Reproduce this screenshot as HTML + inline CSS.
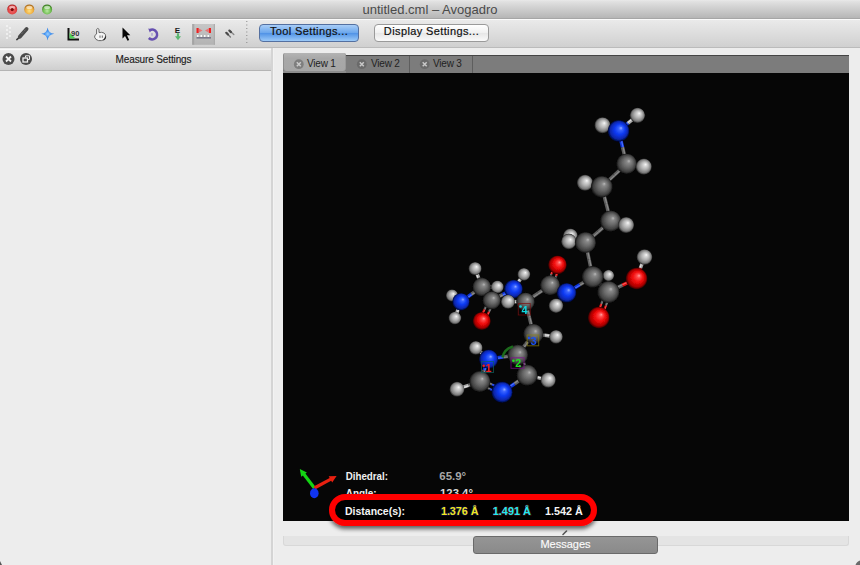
<!DOCTYPE html>
<html><head><meta charset="utf-8">
<style>
*{margin:0;padding:0;box-sizing:border-box}
html,body{width:860px;height:565px;overflow:hidden;background:#ededed;font-family:"Liberation Sans",sans-serif}
.abs{position:absolute}
#title{left:0;top:0;width:860px;height:19px;background:linear-gradient(#e9e9e9,#e0e0e0 10%,#b6b6b6);border-bottom:1px solid #a6a6a6}
#title .t{position:absolute;left:0;width:860px;top:2px;text-align:center;font-size:13px;color:#4a4a4a}
.tl{position:absolute;top:4px;width:11px;height:11px;border-radius:50%}
#toolbar{left:0;top:19px;width:860px;height:29px;background:linear-gradient(#eaeaea,#d0d0d0);border-top:1px solid #fafafa;border-bottom:1px solid #bbbbbb}
.btn{position:absolute;height:18px;border-radius:4px;font-size:11px;letter-spacing:0.38px;text-align:center;line-height:12px;color:#0a0a0a;-webkit-text-stroke:0.2px #222}
#dock{left:0;top:48px;width:272px;height:517px;background:#ededed}
#docktitle{left:0;top:49px;width:271px;height:22px;background:linear-gradient(#ececec,#cfcfcf);border-top:1px solid #fafafa;border-bottom:1px solid #b4b4b4}
#splitter{left:271px;top:48px;width:2px;height:517px;background:#d4d4d4;border-right:1px solid #f2f2f2;width:3px}
#tabbar{left:283px;top:55px;width:566px;height:18px;background:#7c7c7c;border-top:1px solid #454545}
.tab{position:absolute;top:0;height:17px;font-size:10px;letter-spacing:-0.2px;color:#222;border-right:1px solid #5e5e5e}
.tab span{position:absolute;top:2px}
#gl{left:283px;top:73px;width:566px;height:448px;background:#060606}
#msgbar{left:283px;top:536px;width:566px;height:10px;background:#e4e4e4;border:1px solid #d8d8d8;border-top:none;border-radius:0 0 3px 3px}
#msgbtn{left:473px;top:536px;width:185px;height:18px;background:linear-gradient(#959595,#8a8a8a);border:1px solid #6a6a6a;border-radius:3px;color:#fafafa;font-size:11px;text-align:center;line-height:15px;-webkit-text-stroke:0.15px #fff}
</style></head>
<body>
<div id="title" class="abs">
  <svg class="abs" style="left:0;top:0" width="60" height="19">
  <defs>
   <radialGradient id="tlr" cx="0.5" cy="0.6" r="0.6"><stop offset="0" stop-color="#f07070"/><stop offset="0.7" stop-color="#e04040"/><stop offset="1" stop-color="#a02020"/></radialGradient>
   <radialGradient id="tly" cx="0.5" cy="0.65" r="0.6"><stop offset="0" stop-color="#ffe080"/><stop offset="0.7" stop-color="#eca83a"/><stop offset="1" stop-color="#a86818"/></radialGradient>
   <radialGradient id="tlg" cx="0.5" cy="0.65" r="0.6"><stop offset="0" stop-color="#b8e8a0"/><stop offset="0.7" stop-color="#68b848"/><stop offset="1" stop-color="#3a7a20"/></radialGradient>
  </defs>
  <circle cx="12.2" cy="9.4" r="5" fill="url(#tlr)"/><ellipse cx="12.2" cy="7.4" rx="3" ry="1.6" fill="#fff" opacity="0.55"/><circle cx="12.2" cy="9.6" r="1.6" fill="#7a0a0a"/>
  <circle cx="29.3" cy="9.4" r="5" fill="url(#tly)"/><ellipse cx="29.3" cy="7.4" rx="3" ry="1.6" fill="#fff" opacity="0.55"/>
  <circle cx="47.1" cy="9.4" r="5" fill="url(#tlg)"/><ellipse cx="47.1" cy="7.4" rx="3" ry="1.6" fill="#fff" opacity="0.55"/>
</svg>
  <div class="t">untitled.cml – Avogadro</div>
</div>
<div id="toolbar" class="abs">
  <div class="btn" style="left:259px;top:4px;width:100px;background:linear-gradient(#a8cdf7 0%,#6aa6ec 50%,#4f92e6 51%,#9ccaf8 100%);border:1px solid #5470a0">Tool Settings...</div>
  <div class="btn" style="left:374px;top:4px;width:115px;background:linear-gradient(#ffffff,#f0f0f0 50%,#e6e6e6 51%,#fafafa);border:1px solid #9a9a9a">Display Settings...</div>
</div>
<div id="dock" class="abs"></div>
<div id="docktitle" class="abs">
  <div class="abs" style="left:35px;top:4px;width:237px;text-align:center;font-size:10px;letter-spacing:-0.12px;color:#151515;-webkit-text-stroke:0.15px #333">Measure Settings</div>
</div>
<div id="splitter" class="abs"></div>
<div id="tabbar" class="abs">
  <div class="abs" style="left:0;top:15px;width:63px;height:2px;background:#8c8c8c"></div>
  <div class="tab" style="left:0;top:-3px;height:18px;width:63px;background:linear-gradient(#b4b4b4,#a8a8a8 30%,#a6a6a6);border-left:1px solid #8e8e8e;border-radius:2px 2px 3px 3px;border-right:1px solid #999"><span style="left:23px;top:5px">View 1</span></div>
  <div class="tab" style="left:63px;width:64px"><span style="left:25px">View 2</span></div>
  <div class="tab" style="left:127px;width:63px"><span style="left:23px">View 3</span></div>
</div>
<div id="gl" class="abs"></div>
<svg class="abs" style="left:0;top:0" width="860" height="565" viewBox="0 0 860 565">
<defs><filter id="soft" x="-5%" y="-5%" width="110%" height="110%"><feGaussianBlur stdDeviation="0.55"/></filter></defs><g filter="url(#soft)">
<defs>
<radialGradient id="gC" cx="0.5" cy="0.5" r="0.5" fx="0.62" fy="0.36"><stop offset="0" stop-color="#b8b8b8"/><stop offset="0.18" stop-color="#888888"/><stop offset="0.5" stop-color="#686868"/><stop offset="0.82" stop-color="#404040"/><stop offset="1" stop-color="#101010"/></radialGradient>
<radialGradient id="gH" cx="0.5" cy="0.5" r="0.5" fx="0.62" fy="0.36"><stop offset="0" stop-color="#fafafa"/><stop offset="0.18" stop-color="#dadada"/><stop offset="0.5" stop-color="#b0b0b0"/><stop offset="0.82" stop-color="#7a7a7a"/><stop offset="1" stop-color="#202020"/></radialGradient>
<radialGradient id="gN" cx="0.5" cy="0.5" r="0.5" fx="0.62" fy="0.36"><stop offset="0" stop-color="#9ab0ff"/><stop offset="0.18" stop-color="#3a64ff"/><stop offset="0.5" stop-color="#0a38f0"/><stop offset="0.82" stop-color="#0826a8"/><stop offset="1" stop-color="#010630"/></radialGradient>
<radialGradient id="gO" cx="0.5" cy="0.5" r="0.5" fx="0.62" fy="0.36"><stop offset="0" stop-color="#ffa0a0"/><stop offset="0.18" stop-color="#ff4a4a"/><stop offset="0.5" stop-color="#f00808"/><stop offset="0.82" stop-color="#a80404"/><stop offset="1" stop-color="#300000"/></radialGradient>
</defs>
<line x1="618.6" y1="130.9" x2="610.5" y2="128.1" stroke="#1034d8" stroke-width="3.5"/>
<line x1="610.5" y1="128.1" x2="602.5" y2="125.2" stroke="#a8a8a8" stroke-width="3.5"/>
<line x1="618.4" y1="131.4" x2="610.4" y2="128.5" stroke="#4a70ff" stroke-width="1.22"/>
<line x1="610.4" y1="128.5" x2="602.3" y2="125.7" stroke="#e0e0e0" stroke-width="1.22"/>
<line x1="618.6" y1="130.9" x2="628.0" y2="123.1" stroke="#1034d8" stroke-width="3.5"/>
<line x1="628.0" y1="123.1" x2="637.5" y2="115.3" stroke="#a8a8a8" stroke-width="3.5"/>
<line x1="618.3" y1="130.5" x2="627.7" y2="122.7" stroke="#4a70ff" stroke-width="1.22"/>
<line x1="627.7" y1="122.7" x2="637.2" y2="114.9" stroke="#e0e0e0" stroke-width="1.22"/>
<line x1="618.6" y1="130.9" x2="622.6" y2="147.4" stroke="#1034d8" stroke-width="3.5"/>
<line x1="622.6" y1="147.4" x2="626.6" y2="163.8" stroke="#5e5e5e" stroke-width="3.5"/>
<line x1="619.1" y1="130.8" x2="623.1" y2="147.2" stroke="#4a70ff" stroke-width="1.22"/>
<line x1="623.1" y1="147.2" x2="627.1" y2="163.7" stroke="#8a8a8a" stroke-width="1.22"/>
<line x1="626.6" y1="163.8" x2="635.2" y2="165.2" stroke="#5e5e5e" stroke-width="3.5"/>
<line x1="635.2" y1="165.2" x2="643.8" y2="166.6" stroke="#a8a8a8" stroke-width="3.5"/>
<line x1="626.7" y1="163.3" x2="635.3" y2="164.7" stroke="#8a8a8a" stroke-width="1.22"/>
<line x1="635.3" y1="164.7" x2="643.9" y2="166.1" stroke="#e0e0e0" stroke-width="1.22"/>
<line x1="626.6" y1="163.8" x2="614.2" y2="175.2" stroke="#5e5e5e" stroke-width="3.5"/>
<line x1="614.2" y1="175.2" x2="601.8" y2="186.7" stroke="#5e5e5e" stroke-width="3.5"/>
<line x1="627.0" y1="164.2" x2="614.6" y2="175.6" stroke="#8a8a8a" stroke-width="1.22"/>
<line x1="614.6" y1="175.6" x2="602.2" y2="187.1" stroke="#8a8a8a" stroke-width="1.22"/>
<line x1="601.8" y1="186.7" x2="593.4" y2="184.8" stroke="#5e5e5e" stroke-width="3.5"/>
<line x1="593.4" y1="184.8" x2="585.0" y2="182.8" stroke="#a8a8a8" stroke-width="3.5"/>
<line x1="601.7" y1="187.2" x2="593.3" y2="185.3" stroke="#8a8a8a" stroke-width="1.22"/>
<line x1="593.3" y1="185.3" x2="584.9" y2="183.3" stroke="#e0e0e0" stroke-width="1.22"/>
<line x1="601.8" y1="186.7" x2="606.2" y2="203.8" stroke="#5e5e5e" stroke-width="3.5"/>
<line x1="606.2" y1="203.8" x2="610.7" y2="221.0" stroke="#5e5e5e" stroke-width="3.5"/>
<line x1="602.3" y1="186.6" x2="606.8" y2="203.7" stroke="#8a8a8a" stroke-width="1.22"/>
<line x1="606.8" y1="203.7" x2="611.2" y2="220.9" stroke="#8a8a8a" stroke-width="1.22"/>
<line x1="610.7" y1="221.0" x2="618.4" y2="223.0" stroke="#5e5e5e" stroke-width="3.5"/>
<line x1="618.4" y1="223.0" x2="626.1" y2="225.0" stroke="#a8a8a8" stroke-width="3.5"/>
<line x1="610.8" y1="220.5" x2="618.5" y2="222.5" stroke="#8a8a8a" stroke-width="1.22"/>
<line x1="618.5" y1="222.5" x2="626.2" y2="224.5" stroke="#e0e0e0" stroke-width="1.22"/>
<line x1="610.7" y1="221.0" x2="598.1" y2="231.8" stroke="#5e5e5e" stroke-width="3.5"/>
<line x1="598.1" y1="231.8" x2="585.5" y2="242.5" stroke="#5e5e5e" stroke-width="3.5"/>
<line x1="611.0" y1="221.4" x2="598.4" y2="232.1" stroke="#8a8a8a" stroke-width="1.22"/>
<line x1="598.4" y1="232.1" x2="585.8" y2="242.9" stroke="#8a8a8a" stroke-width="1.22"/>
<line x1="585.5" y1="242.5" x2="578.0" y2="239.2" stroke="#5e5e5e" stroke-width="3.5"/>
<line x1="578.0" y1="239.2" x2="570.4" y2="236.0" stroke="#a8a8a8" stroke-width="3.5"/>
<line x1="585.3" y1="243.0" x2="577.7" y2="239.7" stroke="#8a8a8a" stroke-width="1.22"/>
<line x1="577.7" y1="239.7" x2="570.2" y2="236.5" stroke="#e0e0e0" stroke-width="1.22"/>
<line x1="585.5" y1="242.5" x2="577.1" y2="242.0" stroke="#5e5e5e" stroke-width="3.5"/>
<line x1="577.1" y1="242.0" x2="568.8" y2="241.5" stroke="#a8a8a8" stroke-width="3.5"/>
<line x1="585.5" y1="243.0" x2="577.1" y2="242.5" stroke="#8a8a8a" stroke-width="1.22"/>
<line x1="577.1" y1="242.5" x2="568.8" y2="242.0" stroke="#e0e0e0" stroke-width="1.22"/>
<line x1="585.5" y1="242.5" x2="589.1" y2="259.7" stroke="#5e5e5e" stroke-width="3.5"/>
<line x1="589.1" y1="259.7" x2="592.7" y2="276.9" stroke="#5e5e5e" stroke-width="3.5"/>
<line x1="586.0" y1="242.4" x2="589.6" y2="259.6" stroke="#8a8a8a" stroke-width="1.22"/>
<line x1="589.6" y1="259.6" x2="593.2" y2="276.8" stroke="#8a8a8a" stroke-width="1.22"/>
<line x1="592.7" y1="276.9" x2="600.6" y2="276.2" stroke="#5e5e5e" stroke-width="3.5"/>
<line x1="600.6" y1="276.2" x2="608.5" y2="275.5" stroke="#a8a8a8" stroke-width="3.5"/>
<line x1="592.7" y1="276.4" x2="600.6" y2="275.7" stroke="#8a8a8a" stroke-width="1.22"/>
<line x1="600.6" y1="275.7" x2="608.5" y2="275.0" stroke="#e0e0e0" stroke-width="1.22"/>
<line x1="592.7" y1="276.9" x2="600.5" y2="284.4" stroke="#5e5e5e" stroke-width="3.5"/>
<line x1="600.5" y1="284.4" x2="608.4" y2="292.0" stroke="#5e5e5e" stroke-width="3.5"/>
<line x1="593.1" y1="276.5" x2="600.9" y2="284.1" stroke="#8a8a8a" stroke-width="1.22"/>
<line x1="600.9" y1="284.1" x2="608.8" y2="291.6" stroke="#8a8a8a" stroke-width="1.22"/>
<line x1="608.4" y1="292.0" x2="622.5" y2="285.2" stroke="#5e5e5e" stroke-width="3.5"/>
<line x1="622.5" y1="285.2" x2="636.6" y2="278.5" stroke="#d81010" stroke-width="3.5"/>
<line x1="608.2" y1="291.5" x2="622.3" y2="284.8" stroke="#8a8a8a" stroke-width="1.22"/>
<line x1="622.3" y1="284.8" x2="636.4" y2="278.0" stroke="#ff5a5a" stroke-width="1.22"/>
<line x1="636.6" y1="278.5" x2="640.5" y2="267.8" stroke="#d81010" stroke-width="3.5"/>
<line x1="640.5" y1="267.8" x2="644.5" y2="257.0" stroke="#a8a8a8" stroke-width="3.5"/>
<line x1="636.1" y1="278.3" x2="640.1" y2="267.6" stroke="#ff5a5a" stroke-width="1.22"/>
<line x1="640.1" y1="267.6" x2="644.0" y2="256.8" stroke="#e0e0e0" stroke-width="1.22"/>
<line x1="610.7" y1="292.9" x2="605.9" y2="305.6" stroke="#5e5e5e" stroke-width="2.2"/>
<line x1="605.9" y1="305.6" x2="601.1" y2="318.4" stroke="#d81010" stroke-width="2.2"/>
<line x1="611.0" y1="293.0" x2="606.2" y2="305.7" stroke="#8a8a8a" stroke-width="0.77"/>
<line x1="606.2" y1="305.7" x2="601.4" y2="318.5" stroke="#ff5a5a" stroke-width="0.77"/>
<line x1="606.1" y1="291.1" x2="601.3" y2="303.9" stroke="#5e5e5e" stroke-width="2.2"/>
<line x1="601.3" y1="303.9" x2="596.5" y2="316.6" stroke="#d81010" stroke-width="2.2"/>
<line x1="606.4" y1="291.2" x2="601.6" y2="304.0" stroke="#8a8a8a" stroke-width="0.77"/>
<line x1="601.6" y1="304.0" x2="596.8" y2="316.7" stroke="#ff5a5a" stroke-width="0.77"/>
<line x1="592.7" y1="276.9" x2="579.7" y2="284.8" stroke="#5e5e5e" stroke-width="3.5"/>
<line x1="579.7" y1="284.8" x2="566.6" y2="292.7" stroke="#1034d8" stroke-width="3.5"/>
<line x1="593.0" y1="277.3" x2="579.9" y2="285.2" stroke="#8a8a8a" stroke-width="1.22"/>
<line x1="579.9" y1="285.2" x2="566.9" y2="293.1" stroke="#4a70ff" stroke-width="1.22"/>
<line x1="566.6" y1="292.7" x2="561.3" y2="299.2" stroke="#1034d8" stroke-width="3.5"/>
<line x1="561.3" y1="299.2" x2="556.0" y2="305.7" stroke="#a8a8a8" stroke-width="3.5"/>
<line x1="567.0" y1="293.0" x2="561.7" y2="299.5" stroke="#4a70ff" stroke-width="1.22"/>
<line x1="561.7" y1="299.5" x2="556.4" y2="306.0" stroke="#e0e0e0" stroke-width="1.22"/>
<line x1="566.6" y1="292.7" x2="558.4" y2="289.0" stroke="#1034d8" stroke-width="3.5"/>
<line x1="558.4" y1="289.0" x2="550.1" y2="285.3" stroke="#5e5e5e" stroke-width="3.5"/>
<line x1="566.4" y1="293.2" x2="558.1" y2="289.5" stroke="#4a70ff" stroke-width="1.22"/>
<line x1="558.1" y1="289.5" x2="549.9" y2="285.8" stroke="#8a8a8a" stroke-width="1.22"/>
<line x1="547.7" y1="284.5" x2="551.4" y2="274.2" stroke="#5e5e5e" stroke-width="2.2"/>
<line x1="551.4" y1="274.2" x2="555.1" y2="264.0" stroke="#d81010" stroke-width="2.2"/>
<line x1="547.4" y1="284.3" x2="551.1" y2="274.1" stroke="#8a8a8a" stroke-width="0.77"/>
<line x1="551.1" y1="274.1" x2="554.8" y2="263.8" stroke="#ff5a5a" stroke-width="0.77"/>
<line x1="552.5" y1="286.1" x2="556.2" y2="275.9" stroke="#5e5e5e" stroke-width="2.2"/>
<line x1="556.2" y1="275.9" x2="559.9" y2="265.6" stroke="#d81010" stroke-width="2.2"/>
<line x1="552.1" y1="286.0" x2="555.8" y2="275.8" stroke="#8a8a8a" stroke-width="0.77"/>
<line x1="555.8" y1="275.8" x2="559.5" y2="265.5" stroke="#ff5a5a" stroke-width="0.77"/>
<line x1="550.1" y1="285.3" x2="537.8" y2="293.5" stroke="#5e5e5e" stroke-width="3.5"/>
<line x1="537.8" y1="293.5" x2="525.5" y2="301.7" stroke="#5e5e5e" stroke-width="3.5"/>
<line x1="550.4" y1="285.7" x2="538.1" y2="293.9" stroke="#8a8a8a" stroke-width="1.22"/>
<line x1="538.1" y1="293.9" x2="525.8" y2="302.1" stroke="#8a8a8a" stroke-width="1.22"/>
<line x1="525.5" y1="301.7" x2="516.8" y2="301.7" stroke="#5e5e5e" stroke-width="3.5"/>
<line x1="516.8" y1="301.7" x2="508.0" y2="301.7" stroke="#a8a8a8" stroke-width="3.5"/>
<line x1="525.5" y1="302.2" x2="516.8" y2="302.2" stroke="#8a8a8a" stroke-width="1.22"/>
<line x1="516.8" y1="302.2" x2="508.0" y2="302.2" stroke="#e0e0e0" stroke-width="1.22"/>
<line x1="525.5" y1="301.7" x2="519.5" y2="295.4" stroke="#5e5e5e" stroke-width="3.5"/>
<line x1="519.5" y1="295.4" x2="513.5" y2="289.0" stroke="#1034d8" stroke-width="3.5"/>
<line x1="525.1" y1="302.1" x2="519.1" y2="295.7" stroke="#8a8a8a" stroke-width="1.22"/>
<line x1="519.1" y1="295.7" x2="513.1" y2="289.4" stroke="#4a70ff" stroke-width="1.22"/>
<line x1="513.5" y1="289.0" x2="518.7" y2="281.6" stroke="#1034d8" stroke-width="3.5"/>
<line x1="518.7" y1="281.6" x2="523.9" y2="274.3" stroke="#a8a8a8" stroke-width="3.5"/>
<line x1="513.1" y1="288.7" x2="518.3" y2="281.3" stroke="#4a70ff" stroke-width="1.22"/>
<line x1="518.3" y1="281.3" x2="523.5" y2="274.0" stroke="#e0e0e0" stroke-width="1.22"/>
<line x1="525.5" y1="301.7" x2="529.5" y2="317.8" stroke="#5e5e5e" stroke-width="3.5"/>
<line x1="529.5" y1="317.8" x2="533.4" y2="333.8" stroke="#5e5e5e" stroke-width="3.5"/>
<line x1="526.0" y1="301.6" x2="530.0" y2="317.6" stroke="#8a8a8a" stroke-width="1.22"/>
<line x1="530.0" y1="317.6" x2="533.9" y2="333.7" stroke="#8a8a8a" stroke-width="1.22"/>
<line x1="533.4" y1="333.8" x2="544.7" y2="335.3" stroke="#5e5e5e" stroke-width="3.5"/>
<line x1="544.7" y1="335.3" x2="556.0" y2="336.8" stroke="#a8a8a8" stroke-width="3.5"/>
<line x1="533.5" y1="333.3" x2="544.8" y2="334.8" stroke="#8a8a8a" stroke-width="1.22"/>
<line x1="544.8" y1="334.8" x2="556.1" y2="336.3" stroke="#e0e0e0" stroke-width="1.22"/>
<line x1="533.4" y1="333.8" x2="525.6" y2="344.4" stroke="#5e5e5e" stroke-width="3.5"/>
<line x1="525.6" y1="344.4" x2="517.8" y2="354.9" stroke="#5e5e5e" stroke-width="3.5"/>
<line x1="533.8" y1="334.1" x2="526.0" y2="344.7" stroke="#8a8a8a" stroke-width="1.22"/>
<line x1="526.0" y1="344.7" x2="518.2" y2="355.2" stroke="#8a8a8a" stroke-width="1.22"/>
<line x1="517.8" y1="354.9" x2="503.2" y2="357.0" stroke="#5e5e5e" stroke-width="3.5"/>
<line x1="503.2" y1="357.0" x2="488.6" y2="359.1" stroke="#1034d8" stroke-width="3.5"/>
<line x1="517.9" y1="355.4" x2="503.3" y2="357.5" stroke="#8a8a8a" stroke-width="1.22"/>
<line x1="503.3" y1="357.5" x2="488.7" y2="359.6" stroke="#4a70ff" stroke-width="1.22"/>
<line x1="488.6" y1="359.1" x2="482.2" y2="353.5" stroke="#1034d8" stroke-width="3.5"/>
<line x1="482.2" y1="353.5" x2="475.8" y2="347.8" stroke="#a8a8a8" stroke-width="3.5"/>
<line x1="488.3" y1="359.5" x2="481.9" y2="353.8" stroke="#4a70ff" stroke-width="1.22"/>
<line x1="481.9" y1="353.8" x2="475.5" y2="348.2" stroke="#e0e0e0" stroke-width="1.22"/>
<line x1="488.6" y1="359.1" x2="484.2" y2="370.3" stroke="#1034d8" stroke-width="3.5"/>
<line x1="484.2" y1="370.3" x2="479.9" y2="381.5" stroke="#5e5e5e" stroke-width="3.5"/>
<line x1="489.1" y1="359.3" x2="484.7" y2="370.5" stroke="#4a70ff" stroke-width="1.22"/>
<line x1="484.7" y1="370.5" x2="480.4" y2="381.7" stroke="#8a8a8a" stroke-width="1.22"/>
<line x1="479.9" y1="381.5" x2="468.4" y2="385.4" stroke="#5e5e5e" stroke-width="3.5"/>
<line x1="468.4" y1="385.4" x2="457.0" y2="389.2" stroke="#a8a8a8" stroke-width="3.5"/>
<line x1="480.1" y1="382.0" x2="468.6" y2="385.8" stroke="#8a8a8a" stroke-width="1.22"/>
<line x1="468.6" y1="385.8" x2="457.2" y2="389.7" stroke="#e0e0e0" stroke-width="1.22"/>
<line x1="481.0" y1="379.2" x2="492.1" y2="384.6" stroke="#5e5e5e" stroke-width="2.2"/>
<line x1="492.1" y1="384.6" x2="503.2" y2="389.9" stroke="#1034d8" stroke-width="2.2"/>
<line x1="481.1" y1="379.0" x2="492.2" y2="384.3" stroke="#8a8a8a" stroke-width="0.77"/>
<line x1="492.2" y1="384.3" x2="503.3" y2="389.7" stroke="#4a70ff" stroke-width="0.77"/>
<line x1="478.8" y1="383.8" x2="489.9" y2="389.1" stroke="#5e5e5e" stroke-width="2.2"/>
<line x1="489.9" y1="389.1" x2="501.0" y2="394.5" stroke="#1034d8" stroke-width="2.2"/>
<line x1="479.0" y1="383.5" x2="490.1" y2="388.8" stroke="#8a8a8a" stroke-width="0.77"/>
<line x1="490.1" y1="388.8" x2="501.2" y2="394.2" stroke="#4a70ff" stroke-width="0.77"/>
<line x1="502.1" y1="392.2" x2="514.6" y2="383.7" stroke="#1034d8" stroke-width="3.5"/>
<line x1="514.6" y1="383.7" x2="527.1" y2="375.2" stroke="#5e5e5e" stroke-width="3.5"/>
<line x1="501.8" y1="391.8" x2="514.3" y2="383.3" stroke="#4a70ff" stroke-width="1.22"/>
<line x1="514.3" y1="383.3" x2="526.8" y2="374.8" stroke="#8a8a8a" stroke-width="1.22"/>
<line x1="527.1" y1="375.2" x2="537.7" y2="377.6" stroke="#5e5e5e" stroke-width="3.5"/>
<line x1="537.7" y1="377.6" x2="548.2" y2="380.0" stroke="#a8a8a8" stroke-width="3.5"/>
<line x1="527.2" y1="374.7" x2="537.8" y2="377.1" stroke="#8a8a8a" stroke-width="1.22"/>
<line x1="537.8" y1="377.1" x2="548.3" y2="379.5" stroke="#e0e0e0" stroke-width="1.22"/>
<line x1="524.8" y1="376.2" x2="520.2" y2="366.1" stroke="#5e5e5e" stroke-width="2.2"/>
<line x1="520.2" y1="366.1" x2="515.5" y2="355.9" stroke="#5e5e5e" stroke-width="2.2"/>
<line x1="524.5" y1="376.4" x2="519.9" y2="366.2" stroke="#8a8a8a" stroke-width="0.77"/>
<line x1="519.9" y1="366.2" x2="515.2" y2="356.1" stroke="#8a8a8a" stroke-width="0.77"/>
<line x1="529.4" y1="374.2" x2="524.7" y2="364.0" stroke="#5e5e5e" stroke-width="2.2"/>
<line x1="524.7" y1="364.0" x2="520.1" y2="353.9" stroke="#5e5e5e" stroke-width="2.2"/>
<line x1="529.1" y1="374.3" x2="524.4" y2="364.1" stroke="#8a8a8a" stroke-width="0.77"/>
<line x1="524.4" y1="364.1" x2="519.8" y2="354.0" stroke="#8a8a8a" stroke-width="0.77"/>
<line x1="513.5" y1="289.0" x2="502.6" y2="294.6" stroke="#1034d8" stroke-width="3.5"/>
<line x1="502.6" y1="294.6" x2="491.7" y2="300.3" stroke="#5e5e5e" stroke-width="3.5"/>
<line x1="513.7" y1="289.5" x2="502.8" y2="295.1" stroke="#4a70ff" stroke-width="1.22"/>
<line x1="502.8" y1="295.1" x2="491.9" y2="300.8" stroke="#8a8a8a" stroke-width="1.22"/>
<line x1="494.0" y1="301.4" x2="489.0" y2="311.7" stroke="#5e5e5e" stroke-width="2.2"/>
<line x1="489.0" y1="311.7" x2="484.1" y2="322.0" stroke="#d81010" stroke-width="2.2"/>
<line x1="494.3" y1="301.5" x2="489.3" y2="311.8" stroke="#8a8a8a" stroke-width="0.77"/>
<line x1="489.3" y1="311.8" x2="484.4" y2="322.1" stroke="#ff5a5a" stroke-width="0.77"/>
<line x1="489.4" y1="299.2" x2="484.5" y2="309.5" stroke="#5e5e5e" stroke-width="2.2"/>
<line x1="484.5" y1="309.5" x2="479.5" y2="319.8" stroke="#d81010" stroke-width="2.2"/>
<line x1="489.7" y1="299.4" x2="484.8" y2="309.7" stroke="#8a8a8a" stroke-width="0.77"/>
<line x1="484.8" y1="309.7" x2="479.8" y2="320.0" stroke="#ff5a5a" stroke-width="0.77"/>
<line x1="491.7" y1="300.3" x2="486.8" y2="293.6" stroke="#5e5e5e" stroke-width="3.5"/>
<line x1="486.8" y1="293.6" x2="481.8" y2="286.9" stroke="#5e5e5e" stroke-width="3.5"/>
<line x1="491.3" y1="300.6" x2="486.3" y2="293.9" stroke="#8a8a8a" stroke-width="1.22"/>
<line x1="486.3" y1="293.9" x2="481.4" y2="287.2" stroke="#8a8a8a" stroke-width="1.22"/>
<line x1="481.8" y1="286.9" x2="478.5" y2="277.7" stroke="#5e5e5e" stroke-width="3.5"/>
<line x1="478.5" y1="277.7" x2="475.1" y2="268.5" stroke="#a8a8a8" stroke-width="3.5"/>
<line x1="481.3" y1="287.1" x2="478.0" y2="277.9" stroke="#8a8a8a" stroke-width="1.22"/>
<line x1="478.0" y1="277.9" x2="474.6" y2="268.7" stroke="#e0e0e0" stroke-width="1.22"/>
<line x1="481.8" y1="286.9" x2="489.6" y2="286.9" stroke="#5e5e5e" stroke-width="3.5"/>
<line x1="489.6" y1="286.9" x2="497.4" y2="286.9" stroke="#a8a8a8" stroke-width="3.5"/>
<line x1="481.8" y1="286.4" x2="489.6" y2="286.4" stroke="#8a8a8a" stroke-width="1.22"/>
<line x1="489.6" y1="286.4" x2="497.4" y2="286.4" stroke="#e0e0e0" stroke-width="1.22"/>
<line x1="481.8" y1="286.9" x2="471.4" y2="294.3" stroke="#5e5e5e" stroke-width="3.5"/>
<line x1="471.4" y1="294.3" x2="461.0" y2="301.7" stroke="#1034d8" stroke-width="3.5"/>
<line x1="482.1" y1="287.3" x2="471.7" y2="294.7" stroke="#8a8a8a" stroke-width="1.22"/>
<line x1="471.7" y1="294.7" x2="461.3" y2="302.1" stroke="#4a70ff" stroke-width="1.22"/>
<line x1="461.0" y1="301.7" x2="456.5" y2="298.5" stroke="#1034d8" stroke-width="3.5"/>
<line x1="456.5" y1="298.5" x2="452.0" y2="295.4" stroke="#a8a8a8" stroke-width="3.5"/>
<line x1="460.7" y1="302.1" x2="456.2" y2="299.0" stroke="#4a70ff" stroke-width="1.22"/>
<line x1="456.2" y1="299.0" x2="451.7" y2="295.8" stroke="#e0e0e0" stroke-width="1.22"/>
<line x1="461.0" y1="301.7" x2="457.9" y2="309.9" stroke="#1034d8" stroke-width="3.5"/>
<line x1="457.9" y1="309.9" x2="454.9" y2="318.0" stroke="#a8a8a8" stroke-width="3.5"/>
<line x1="461.5" y1="301.9" x2="458.4" y2="310.0" stroke="#4a70ff" stroke-width="1.22"/>
<line x1="458.4" y1="310.0" x2="455.4" y2="318.2" stroke="#e0e0e0" stroke-width="1.22"/>
<circle cx="497.4" cy="286.9" r="6.37" fill="url(#gH)"/>
<circle cx="452" cy="295.4" r="6.08" fill="url(#gH)"/>
<circle cx="475.1" cy="268.5" r="6.57" fill="url(#gH)"/>
<circle cx="481.8" cy="286.9" r="9.31" fill="url(#gC)"/>
<circle cx="461" cy="301.7" r="8.72" fill="url(#gN)"/>
<circle cx="454.9" cy="318" r="6.37" fill="url(#gH)"/>
<circle cx="491.7" cy="300.3" r="9.11" fill="url(#gC)"/>
<circle cx="481.8" cy="320.9" r="9.02" fill="url(#gO)"/>
<circle cx="523.9" cy="274.3" r="6.37" fill="url(#gH)"/>
<circle cx="513.5" cy="289" r="9.31" fill="url(#gN)"/>
<circle cx="525.5" cy="301.7" r="9.31" fill="url(#gC)"/>
<circle cx="508" cy="301.7" r="7.06" fill="url(#gH)"/>
<circle cx="556" cy="336.8" r="6.86" fill="url(#gH)"/>
<circle cx="533.4" cy="333.8" r="10.09" fill="url(#gC)"/>
<circle cx="475.8" cy="347.8" r="6.86" fill="url(#gH)"/>
<circle cx="488.6" cy="359.1" r="9.60" fill="url(#gN)"/>
<circle cx="517.8" cy="354.9" r="10.29" fill="url(#gC)"/>
<circle cx="548.2" cy="380" r="7.64" fill="url(#gH)"/>
<circle cx="527.1" cy="375.2" r="10.58" fill="url(#gC)"/>
<circle cx="457" cy="389.2" r="7.45" fill="url(#gH)"/>
<circle cx="479.9" cy="381.5" r="10.58" fill="url(#gC)"/>
<circle cx="502.1" cy="392.2" r="10.58" fill="url(#gN)"/>
<circle cx="557.5" cy="264.8" r="9.31" fill="url(#gO)"/>
<circle cx="550.1" cy="285.3" r="10.00" fill="url(#gC)"/>
<circle cx="556" cy="305.7" r="7.25" fill="url(#gH)"/>
<circle cx="566.6" cy="292.7" r="9.80" fill="url(#gN)"/>
<circle cx="608.5" cy="275.5" r="5.68" fill="url(#gH)"/>
<circle cx="570.4" cy="236" r="7.45" fill="url(#gH)"/>
<circle cx="568.8" cy="241.5" r="7.64" fill="url(#gH)"/>
<circle cx="585.5" cy="242.5" r="10.58" fill="url(#gC)"/>
<circle cx="592.7" cy="276.9" r="10.78" fill="url(#gC)"/>
<circle cx="608.4" cy="292" r="11.07" fill="url(#gC)"/>
<circle cx="598.8" cy="317.5" r="10.78" fill="url(#gO)"/>
<circle cx="644.5" cy="257" r="7.84" fill="url(#gH)"/>
<circle cx="636.6" cy="278.5" r="10.78" fill="url(#gO)"/>
<circle cx="602.5" cy="125.2" r="8.04" fill="url(#gH)"/>
<circle cx="637.5" cy="115.3" r="7.64" fill="url(#gH)"/>
<circle cx="618.6" cy="130.9" r="10.78" fill="url(#gN)"/>
<circle cx="626.6" cy="163.8" r="10.29" fill="url(#gC)"/>
<circle cx="643.8" cy="166.6" r="8.04" fill="url(#gH)"/>
<circle cx="585" cy="182.8" r="8.04" fill="url(#gH)"/>
<circle cx="601.8" cy="186.7" r="10.78" fill="url(#gC)"/>
<circle cx="610.7" cy="221" r="10.58" fill="url(#gC)"/>
<circle cx="626.1" cy="225" r="8.04" fill="url(#gH)"/>

<path d="M502.5,357.5 Q504,349 513,346.5" stroke="#1a6a1a" stroke-width="2.6" fill="none"/>
<g font-family="Liberation Sans" font-weight="bold" font-size="11">
<rect x="518.3" y="303.5" width="12" height="11.5" fill="none" stroke="#7a1010" stroke-width="1" stroke-opacity="0.7"/>
<circle cx="520.5" cy="306.5" r="1.3" fill="#10d8e0"/><text x="521.6" y="313.8" fill="#10d8e0" font-size="11">4</text>
<rect x="527.2" y="335" width="11.5" height="10.8" fill="none" stroke="#8a8010" stroke-width="1" stroke-opacity="0.7"/>
<circle cx="529" cy="338" r="1.3" fill="#1a50f0"/><text x="530.6" y="345" fill="#1a50f0" font-size="11">3</text>
<rect x="511" y="357.7" width="13" height="10.6" fill="none" stroke="#801090" stroke-width="1" stroke-opacity="0.7"/>
<circle cx="513.4" cy="360.8" r="1.3" fill="#20e020"/><text x="515.3" y="367" fill="#20e020" font-size="10.5">2</text>
<rect x="481.5" y="361.5" width="12" height="11" fill="none" stroke="#106060" stroke-width="1" stroke-opacity="0.7"/>
<circle cx="483.7" cy="365.7" r="1.3" fill="#f02020"/><text x="485.5" y="371.6" fill="#f02020" font-size="11">1</text>
</g>

</g>
</svg>
<svg class="abs" style="left:0;top:0" width="860" height="565" viewBox="0 0 860 565">
<defs>
 <linearGradient id="pshadow" x1="0" y1="0" x2="1" y2="0"><stop offset="0" stop-color="#8a8a8a"/><stop offset="1" stop-color="#bdbdbd" stop-opacity="0"/></linearGradient>
 <linearGradient id="pressed" x1="0" y1="0" x2="0" y2="1"><stop offset="0" stop-color="#c6c6c6"/><stop offset="1" stop-color="#b3b3b3"/></linearGradient>
 <radialGradient id="star" cx="0.5" cy="0.5" r="0.5"><stop offset="0" stop-color="#9cd0ff"/><stop offset="0.5" stop-color="#3f90f0"/><stop offset="1" stop-color="#2a7ae0"/></radialGradient>
</defs>
<!-- grip -->
<g fill="#fafafa" opacity="0.9">
 <circle cx="7" cy="26" r="0.9"/><circle cx="10" cy="28" r="0.9"/><circle cx="7" cy="30" r="0.9"/><circle cx="10" cy="32" r="0.9"/>
 <circle cx="7" cy="34" r="0.9"/><circle cx="10" cy="36" r="0.9"/><circle cx="7" cy="38" r="0.9"/>
</g>
<!-- pencil -->
<path d="M16.8,39.6 L20.2,36.6" stroke="#3a3a3a" stroke-width="1.5" stroke-linecap="round"/>
<path d="M19.8,36.8 L26.6,29" stroke="#4a4a4a" stroke-width="3.8" stroke-linecap="round"/>
<path d="M21.5,34 L25.8,29.3" stroke="#7a7a7a" stroke-width="1" stroke-dasharray="1,1"/>
<!-- star -->
<path d="M47.6,27.4 Q48.3,33 54.3,33.8 Q48.3,34.6 47.6,40.6 Q46.9,34.6 41.2,33.8 Q46.9,33 47.6,27.4 Z" fill="url(#star)"/>
<!-- angle -->
<path d="M68.5,28 L68.5,39.5 L79,39.5" stroke="#111" stroke-width="2" fill="none"/>
<path d="M69.5,32.5 L69.5,38.5 L75.5,38.5 Z" fill="#4fd05a"/>
<text x="71" y="36.3" font-family="Liberation Sans" font-size="7.5" font-weight="bold" fill="#333">90</text>
<!-- hand -->
<path d="M96.6,34 L96.6,29.3 Q97.8,27.6 99,29.3 L99,32.6 Q101.5,31.8 104,33 Q106.2,34.5 105.6,37.3 Q104.8,40.4 101.5,40.6 L98.5,40.6 Q95.5,40 94.6,37.2 Q94.2,35.2 96.6,34 Z" fill="#f4f4f4" stroke="#5a5a5a" stroke-width="0.9"/>
<path d="M100,35.5 L100,37.8 M102.3,35.5 L102.3,37.8" stroke="#555" stroke-width="0.9"/>
<path d="M103.5,40 Q105.5,39 105.6,36.5" stroke="#222" stroke-width="1.2" fill="none"/>
<!-- arrow -->
<path d="M122.5,27.5 L122.5,38.5 L125,36 L127.5,40.8 L129.2,40 L127,35.3 L130.3,35.2 Z" fill="#050505"/>
<!-- rotate -->
<path d="M150.1,30 A4.9,4.9 0 1 1 148.8,38" stroke="#6650b0" stroke-width="2.6" fill="none"/>
<path d="M148.2,28.6 L152.2,29.4 L149.8,32.6 Z" fill="#6650b0"/>
<path d="M152,33 L152,35.8" stroke="#9a8ad0" stroke-width="1.1"/>
<!-- E -->
<text x="174.8" y="32.8" font-family="Liberation Sans" font-size="7.6" font-weight="bold" fill="#1a1a1a" textLength="5.4" lengthAdjust="spacingAndGlyphs">E</text>
<path d="M176.9,33.2 L179.1,33.2 L179.1,36.2 L181,36.2 L178,40.3 L175,36.2 L176.9,36.2 Z" fill="#5cb870"/>
<!-- pressed ruler button -->
<rect x="192.5" y="24" width="22.5" height="20.8" fill="url(#pressed)"/>
<rect x="192.5" y="24" width="3" height="20.8" fill="url(#pshadow)"/>
<rect x="213.8" y="24" width="1" height="20.8" fill="#a9a9a9"/>
<rect x="196.5" y="28" width="2.2" height="5" fill="#f02020"/>
<path d="M198.8,28.4 L202.5,30.5 L198.8,32.6 Z" fill="#f06060" opacity="0.8"/>
<rect x="208.8" y="28" width="2.2" height="5" fill="#f02020"/>
<path d="M208.6,28.4 L205,30.5 L208.6,32.6 Z" fill="#f06060" opacity="0.8"/>
<rect x="196.5" y="37" width="14.5" height="1.6" fill="#7a7a8a"/>
<g fill="#fafafa"><rect x="197" y="35" width="1.5" height="2"/><rect x="200.5" y="35" width="1.5" height="2"/><rect x="204" y="35" width="1.5" height="2"/><rect x="207.5" y="35" width="1.5" height="2"/></g>
<!-- navigate -->
<path d="M226.3,32.8 L230.4,37" stroke="#777" stroke-width="1.4" stroke-linecap="round"/>
<path d="M226.3,32.8 L228,34.5" stroke="#4a4a4a" stroke-width="2.2" stroke-linecap="round"/>
<path d="M229.4,30.6 L233.8,34.6" stroke="#888" stroke-width="1.4" stroke-linecap="round"/>
<path d="M229.4,30.6 L231,32.1" stroke="#4a4a4a" stroke-width="2.2" stroke-linecap="round"/>
<!-- separator -->
<line x1="246.8" y1="21" x2="246.8" y2="45" stroke="#888" stroke-width="1" stroke-dasharray="1,2.5"/>
<!-- dock buttons -->
<circle cx="8.5" cy="59" r="6" fill="#4a4a4a"/>
<path d="M6,56.5 L11,61.5 M11,56.5 L6,61.5" stroke="#f4f4f4" stroke-width="1.8"/>
<circle cx="26" cy="59" r="6" fill="#4a4a4a"/>
<rect x="23" y="58" width="4.5" height="4" fill="none" stroke="#eee" stroke-width="1.3"/>
<path d="M25.5,57.5 L25.5,55.8 L29.5,55.8 L29.5,59.5 L28,59.5" fill="none" stroke="#eee" stroke-width="1"/>
<!-- tab close icons -->
<g>
<circle cx="298.8" cy="64.2" r="4.9" fill="#7e7e7e"/><path d="M296.8,62.2 L300.8,66.2 M300.8,62.2 L296.8,66.2" stroke="#cccccc" stroke-width="1.5"/>
<circle cx="361.8" cy="64.2" r="4.9" fill="#6a6a6a"/><path d="M359.8,62.2 L363.8,66.2 M363.8,62.2 L359.8,66.2" stroke="#c8c8c8" stroke-width="1.5"/>
<circle cx="424.7" cy="64.2" r="4.9" fill="#6a6a6a"/><path d="M422.7,62.2 L426.7,66.2 M426.7,62.2 L422.7,66.2" stroke="#c8c8c8" stroke-width="1.5"/>
</g>
</svg>
<svg class="abs" style="left:0;top:0" width="860" height="565" viewBox="0 0 860 565">
<defs>
 <filter id="shd" x="-10%" y="-30%" width="120%" height="180%"><feGaussianBlur in="SourceAlpha" stdDeviation="2"/><feOffset dx="0" dy="3"/><feComponentTransfer><feFuncA type="linear" slope="0.6"/></feComponentTransfer><feMerge><feMergeNode/><feMergeNode in="SourceGraphic"/></feMerge></filter>
</defs>
<!-- axes -->
<path d="M314.4,488.0 L303.5,473.8" stroke="#14d414" stroke-width="3.2"/><path d="M299.8,469.0 L306.9,472.4 L301.2,476.7 Z" fill="#14d414"/>
<path d="M314.4,488.0 L331.3,478.9" stroke="#e82010" stroke-width="3.2"/><path d="M336.6,476.0 L332.2,482.5 L328.7,476.2 Z" fill="#e82010"/>
<ellipse cx="314.3" cy="493.3" rx="4.3" ry="5" fill="#1034f0"/>
<g font-family="Liberation Sans" font-weight="bold" font-size="11">
 <text x="345.7" y="480" fill="#f0f0f0" textLength="42.3" lengthAdjust="spacingAndGlyphs">Dihedral:</text>
 <text x="439.3" y="480" fill="#a8a8a8" textLength="26.9" lengthAdjust="spacingAndGlyphs">65.9°</text>
 <text x="345.7" y="497" fill="#f0f0f0" textLength="31" lengthAdjust="spacingAndGlyphs">Angle:</text>
 <text x="440" y="497" fill="#d8d8d8" textLength="33" lengthAdjust="spacingAndGlyphs">123.4°</text>
</g>
<rect x="332" y="497" width="262" height="26" rx="13" ry="13" fill="#060606" stroke="#ff0000" stroke-width="6" filter="url(#shd)"/>
<g font-family="Liberation Sans" font-weight="bold" font-size="11">
 <text x="345" y="514.6" fill="#f4f4f4" textLength="60" lengthAdjust="spacingAndGlyphs">Distance(s):</text>
 <text x="440.9" y="514.6" fill="#f0e820" stroke="#1a1a70" stroke-width="1.2" stroke-opacity="0.7" paint-order="stroke" textLength="37.7" lengthAdjust="spacingAndGlyphs">1.376 Å</text>
 <text x="492.7" y="514.6" fill="#20e8f0" stroke="#701a1a" stroke-width="1.2" stroke-opacity="0.7" paint-order="stroke" textLength="38.3" lengthAdjust="spacingAndGlyphs">1.491 Å</text>
 <text x="544.9" y="514.6" fill="#f4f4f4" textLength="37.8" lengthAdjust="spacingAndGlyphs">1.542 Å</text>
</g>
</svg>
<div id="msgbar" class="abs"></div>
<div id="msgbtn" class="abs">Messages</div>
<svg class="abs" style="left:854px;top:559px" width="6" height="6"><path d="M6,1.5 L6,6 L1.5,6 Q2.5,2.5 6,1.5 Z" fill="#6a6a6a"/></svg>
<svg class="abs" style="left:0;top:560px" width="4" height="5"><path d="M0,1 L2,5 L0,5 Z" fill="#555"/></svg>
<svg class="abs" style="left:560px;top:529px" width="10" height="7"><path d="M3,5.5 L6.5,2" stroke="#555" stroke-width="1.6" stroke-linecap="round"/></svg>
</body></html>
